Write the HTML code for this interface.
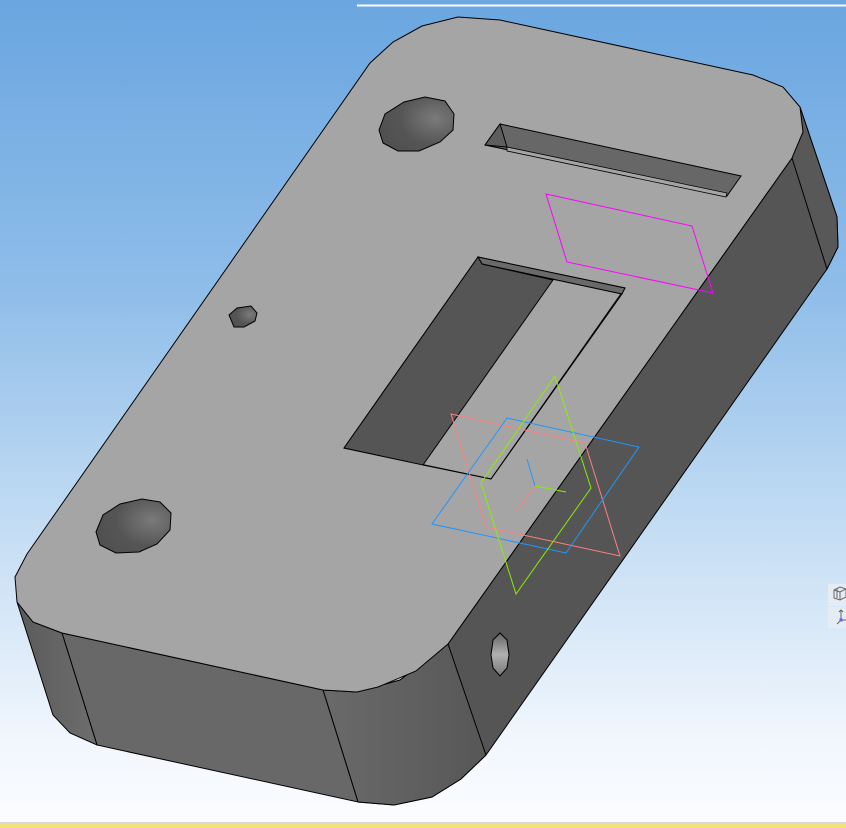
<!DOCTYPE html>
<html><head><meta charset="utf-8"><style>
html,body{margin:0;padding:0;width:846px;height:828px;overflow:hidden}
body{background:linear-gradient(to bottom,#6aa6e0 0%,#8fbde9 35%,#c6def4 65%,#f2f7fd 90%,#fcfdff 100%)}
svg{position:absolute;left:0;top:0}
</style></head><body>
<svg width="846" height="828" viewBox="0 0 846 828" xmlns="http://www.w3.org/2000/svg">
<defs>
<linearGradient id="lc" x1="0" y1="0" x2="1" y2="0"><stop offset="0" stop-color="#5a5a5a"/><stop offset="1" stop-color="#6e6e6e"/></linearGradient>
<linearGradient id="rc" x1="0" y1="0" x2="1" y2="0"><stop offset="0" stop-color="#6a6a6a"/><stop offset="1" stop-color="#575757"/></linearGradient>
<radialGradient id="hole" cx="0.75" cy="0.4" r="0.8"><stop offset="0" stop-color="#7a7a7a"/><stop offset="0.6" stop-color="#555"/><stop offset="1" stop-color="#505050"/></radialGradient>
<linearGradient id="sh" x1="0" y1="0" x2="0" y2="1"><stop offset="0" stop-color="#666"/><stop offset="0.5" stop-color="#b0b0b0"/><stop offset="1" stop-color="#777"/></linearGradient>
</defs>
<line x1="357" y1="5.5" x2="846" y2="5.5" stroke="#fff" stroke-width="2"/>
<rect x="0" y="822" width="846" height="2" fill="#d8d8d8"/>
<rect x="0" y="824" width="846" height="4" fill="#f2e27a"/>
<!-- right side face -->
<polygon points="800,107 837,217 838,247 827,269 486,755 461,779 432,797 394,805 358,802 323,690 357,692 400,680 448,644 792,158 803,132" fill="#555" stroke="#000" stroke-width="1"/>
<!-- right corner cylinder -->
<polygon points="792,158 800,107 837,217 838,247 827,269" fill="#585858" stroke="#000" stroke-width="1"/>
<!-- front bottom rounded corner -->
<polygon points="323,690 357,692 400,680 448,644 486,755 461,779 432,797 394,805 358,802" fill="url(#rc)" stroke="#000" stroke-width="1"/>
<!-- front face -->
<polygon points="62,633 323,690 358,802 97,745" fill="#686868" stroke="#000" stroke-width="1"/>
<!-- left corner -->
<polygon points="17,602 33,622 62,633 97,745 70,733 53,715" fill="url(#lc)" stroke="#000" stroke-width="1"/>
<!-- top face -->
<polygon points="370,63 393,42 422,26 458,17 500,20 753,75 783,87 800,107 803,132 792,158 448,644 416,671 378,687 357,692 323,690 62,633 33,622 17,602 15,577 27,554" fill="#a5a5a5" stroke="#000" stroke-width="1"/>
<!-- side hole -->
<polygon points="493,640 500,633 507,640 509,655 507,668 500,676 493,668 491,655" fill="url(#sh)" stroke="#000" stroke-width="1"/>
<!-- holes -->
<polygon points="379,130 385,114 404,102 425,97 445,101 454,114 453,130 440,142 419,151 398,151 383,143" fill="url(#hole)" stroke="#000" stroke-width="1"/>
<polygon points="96,532 103,515 120,504 142,499 160,502 171,513 170,530 157,544 139,552 116,553 100,545" fill="url(#hole)" stroke="#000" stroke-width="1"/>
<polygon points="229,315 237,308 251,306 257,313 255,321 244,327 234,327" fill="url(#hole)" stroke="#000" stroke-width="1"/>
<!-- slot -->
<polygon points="500,124 741,176 727,196 485,145" fill="#676767" stroke="#000" stroke-width="1"/>
<polygon points="500,124 507,147 485,145" fill="#5e5e5e" stroke="#000" stroke-width="1"/>
<polygon points="507,147 727,193 726,197 507,151" fill="#a5a5a5" stroke="#000" stroke-width="0.8"/>
<!-- rect cutout -->
<polygon points="478,257 625,288 491,479 344,448" fill="#a5a5a5" stroke="#000" stroke-width="1"/>
<polygon points="478,257 625,288 622,294 482,264" fill="#6a6a6a" stroke="#000" stroke-width="1"/>
<polygon points="478,257 482,264 553,280 423,465 344,448" fill="#555" stroke="#000" stroke-width="1"/>
<polyline points="622,294 491,479 423,465" fill="none" stroke="#000" stroke-width="1"/>
<!-- planes -->
<polygon points="546,194 692,226 713,293 567,262" fill="none" stroke="#ff00ff" stroke-width="1"/>
<polygon points="451,414 585,443 620,556 486,527" fill="none" stroke="#ff8080" stroke-width="1"/>
<polygon points="507,418 639,447 566,553 432,524" fill="none" stroke="#1e96ff" stroke-width="1"/>
<polygon points="555,376 591,488 516,594 481,483" fill="none" stroke="#88ee00" stroke-width="1"/>
<line x1="535" y1="486" x2="527" y2="459" stroke="#1e96ff" stroke-width="1"/>
<line x1="535" y1="486" x2="566" y2="492" stroke="#88ee00" stroke-width="1"/>
<line x1="535" y1="486" x2="518" y2="509" stroke="#ff8080" stroke-width="1"/>
<!-- right toolbar icons -->
<rect x="828" y="584" width="18" height="22" fill="#e4ecf4"/>
<rect x="828" y="607" width="18" height="21" fill="#e4ecf4"/>
<g fill="none" stroke="#666" stroke-width="1">
<path d="M834,590 l6,-3 l6,2 v8 l-6,3 l-6,-2 z M834,590 l6,2 l6,-3 M840,592 v8 M837,589 v9"/>
<path d="M841,610 v10 M839,612 l2,-2 l2,2 M841,620 l-4,4 M841,620 h5"/>
</g>
<rect x="839.5" y="618.5" width="3" height="3" fill="#6060ff"/>
</svg>
</body></html>
